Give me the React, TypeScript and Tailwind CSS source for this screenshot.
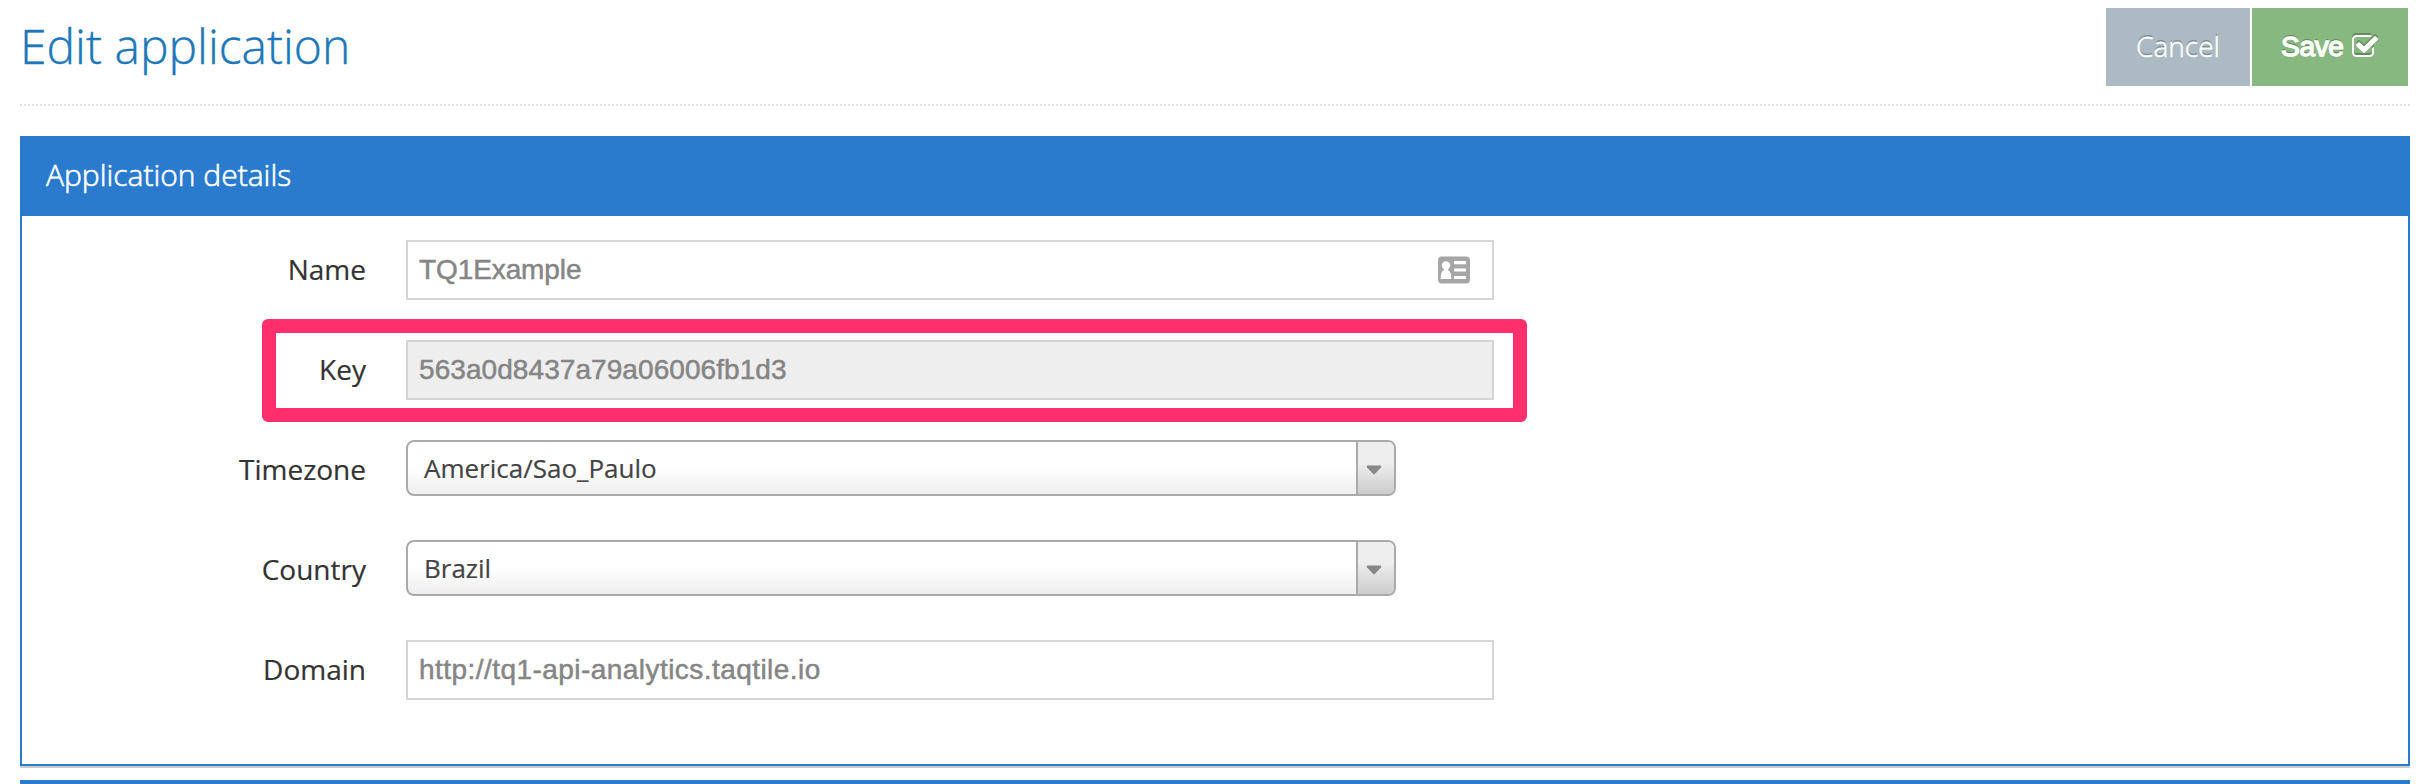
import React from "react";

const LABEL =
  "-mt-px w-[344px] shrink-0 text-right text-[28px] leading-[60px] text-[#333333] [-webkit-text-stroke:0.2px_#333333]";
const INPUT =
  "flex h-[60px] w-[1088px] items-center justify-between border-2 border-[#d5d5d5] pl-[11px] pr-[22px] font-['Liberation_Sans',Arial,sans-serif] text-[28px] leading-none text-[#858585] [-webkit-text-stroke:0.5px_#858585]";

function Row({ label, children }: { label: string; children: React.ReactNode }) {
  return (
    <div className="flex h-[60px] items-start gap-10">
      <label className={LABEL}>{label}</label>
      {children}
    </div>
  );
}

function CardIcon() {
  return (
    <svg className="h-[28px] w-[32px]" viewBox="0 0 32 28">
      <rect x="0" y="0.5" width="32" height="27" rx="4" fill="#a6a6a6" />
      <circle cx="8" cy="9.5" r="4.2" fill="#fff" />
      <path d="M6 12h4v2.3c2 .8 3.3 3 3.3 8.7H2.7c0-5.700 1.300-7.900 3.300-8.700z" fill="#fff" />
      <path d="M16 5h12v3.200H16zM16 12.600h12v3H16zM16 20h12v3H16z" fill="#fff" />
    </svg>
  );
}

function Select({ value }: { value: string }) {
  return (
    <div className="flex h-[56px] w-[990px] overflow-hidden rounded-lg border-2 border-[#aaaaaa] bg-[linear-gradient(to_top,#eeeeee_0%,#ffffff_50%)]">
      <div className="flex-1 pl-4 text-[26px] leading-[52px] text-[#444444] [-webkit-text-stroke:0.2px_#444444]">
        {value}
      </div>
      <div className="flex w-[38px] items-center border-l-2 border-[#aaaaaa] bg-[linear-gradient(to_top,#cccccc_0%,#eeeeee_60%)] pl-2">
        <svg className="mt-[3px] h-[10px] w-4" viewBox="0 0 16 10">
          <path d="M1.500 0.500h13q1.500 0.500 0.500 2L9 8.800q-1 1-2 0L1 2.500q-1-1.500.5-2z" fill="#888888" />
        </svg>
      </div>
    </div>
  );
}

function CheckIcon() {
  return (
    <svg
      className="h-7 w-7 drop-shadow-[0_-2px_0_rgba(0,0,0,0.25)]"
      viewBox="0 0 1792 1792"
      fill="#fff"
    >
      <path d="M1472 930v318q0 119-84.500 203.500t-203.500 84.500h-832q-119 0-203.500-84.500t-84.500-203.500v-832q0-119 84.500-203.500t203.500-84.500h832q63 0 117 25 15 7 18 23 3 17-9 29l-49 49q-10 10-23 10-3 0-9-2-23-6-45-6h-832q-66 0-113 47t-47 113v832q0 66 47 113t113 47h832q66 0 113-47t47-113v-254q0-13 9-22l64-64q10-10 23-10 6 0 12 3 20 8 20 29zm231-489l-814 814q-24 24-57 24t-57-24l-430-430q-24-24-24-57t24-57l110-110q24-24 57-24t57 24l263 263 647-647q24-24 57-24t57 24l110 110q24 24 24 57t-24 57z" />
    </svg>
  );
}

export default function App() {
  return (
    <div className="h-[784px] w-[2424px] overflow-hidden bg-white pl-5 pr-[14px] font-['Open_Sans',sans-serif]">
      <header className="flex h-[106px] items-start justify-between border-b-2 border-dotted border-[#e2e2e2] pr-0.5">
        <h1 className="pt-[13px] text-[48px] font-light leading-[66px] text-[#1d77b9] [-webkit-text-stroke:0.4px_#1d77b9]">
          Edit application
        </h1>
        <div className="flex gap-0.5 pt-2">
          <button className="h-[78px] w-[144px] bg-[#abbac3] pb-[3px] text-[28px] font-light leading-none text-white [-webkit-text-stroke:0.5px_#ffffff] [text-shadow:0_-2px_0_rgba(0,0,0,0.25)]">
            Cancel
          </button>
          <button className="flex h-[78px] w-[156px] items-center bg-[#87b87f] pl-[29px] font-['Liberation_Sans',Arial,sans-serif] text-[28px] leading-none text-white [-webkit-text-stroke:1.3px_#ffffff] [text-shadow:0_-2px_0_rgba(0,0,0,0.25)]">
            <span className="w-[70px] text-left tracking-[-0.3px]">Save</span>
            <CheckIcon />
          </button>
        </div>
      </header>

      <section className="mt-[30px] h-[630px] border-2 border-[#2a7bce] shadow-[0_2px_0_#cccccc]">
        <h2 className="h-[78px] bg-[#2a7bce] pl-6 text-[30px] font-light leading-[74px] text-white [-webkit-text-stroke:0.6px_#ffffff]">
          Application details
        </h2>
        <form className="flex flex-col gap-10 pt-6">
          <Row label="Name">
            <div className={INPUT + " bg-white"}>
              <span className="tracking-[-0.1px]">TQ1Example</span>
              <CardIcon />
            </div>
          </Row>
          <div className="relative">
            <Row label="Key">
              <div className={INPUT + " bg-[#eeeeee] tracking-[0.07px]"}>563a0d8437a79a06006fb1d3</div>
            </Row>
            <div className="pointer-events-none absolute left-[240px] top-[-21px] h-[103px] w-[1265px] rounded-md border-[14px] border-[#ff2e6c]" />
          </div>
          <Row label="Timezone">
            <Select value="America/Sao_Paulo" />
          </Row>
          <Row label="Country">
            <Select value="Brazil" />
          </Row>
          <Row label="Domain">
            <div className={INPUT + " bg-white tracking-[0.45px]"}>http://tq1-api-analytics.taqtile.io</div>
          </Row>
        </form>
      </section>

      <div className="mt-[14px] h-1 bg-[#2a7bce]" />
    </div>
  );
}
